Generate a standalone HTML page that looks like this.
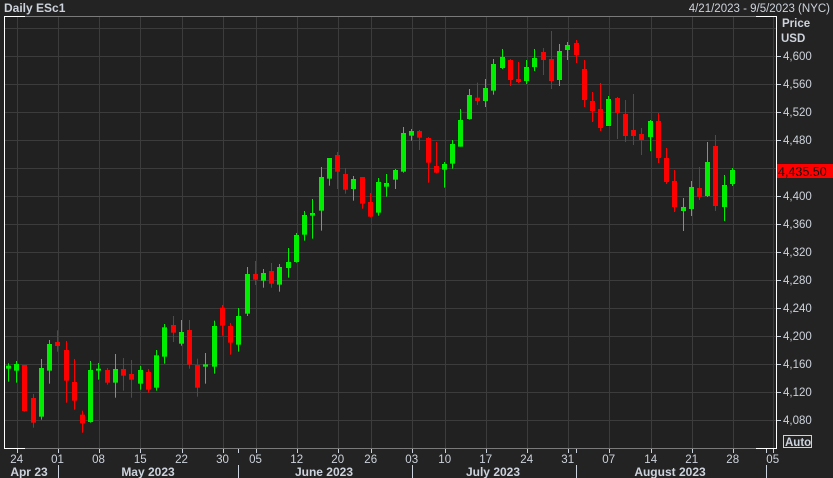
<!DOCTYPE html>
<html><head><meta charset="utf-8"><style>
html,body{margin:0;padding:0;background:#232323;width:833px;height:478px;overflow:hidden}
svg{display:block}
text{font-family:"Liberation Sans",sans-serif;fill:#cdd3dc}
</style></head><body>
<svg id="s" width="833" height="478" xmlns="http://www.w3.org/2000/svg">
<rect x="0" y="0" width="833" height="478" fill="#232323"/>
<rect x="5" y="16" width="771" height="432" fill="#212121"/>
<g id="grid" stroke="#3c3c3c" stroke-width="1"></g>
<g id="c"></g>
<line x1="5" y1="16.5" x2="776" y2="16.5" stroke="#7a7a7a"/>
<line x1="5" y1="448.5" x2="776" y2="448.5" stroke="#7a7a7a"/>
<line x1="4.5" y1="16" x2="4.5" y2="449" stroke="#fff"/>
<line x1="4" y1="16.5" x2="25" y2="16.5" stroke="#fff"/>
<line x1="4" y1="448.5" x2="25" y2="448.5" stroke="#fff"/>
<line x1="776.5" y1="16" x2="776.5" y2="449" stroke="#fff"/>
<line x1="756" y1="16.5" x2="777" y2="16.5" stroke="#fff"/>
<line x1="756" y1="448.5" x2="777" y2="448.5" stroke="#fff"/>
<text x="4" y="12" font-size="12" font-weight="bold">Daily ESc1</text>
<text x="830" y="12" font-size="11.5" text-anchor="end">4/21/2023 - 9/5/2023 (NYC)</text>
<text x="782" y="27" font-size="11.5" font-weight="bold">Price</text>
<text x="781" y="42" font-size="11.5" font-weight="bold">USD</text>
<g id="py"></g>
<rect x="777" y="164" width="56" height="14" fill="#ff0000"/>
<text x="778" y="176" font-size="12.5" style="fill:#111">4,435.50</text>
<rect x="783.5" y="435.5" width="28" height="12" fill="none" stroke="#cdd3dc"/>
<text x="785" y="446" font-size="11.5" font-weight="bold">Auto</text>
<g id="dx"></g>
<text x="29" y="476" font-size="12" font-weight="bold" text-anchor="middle">Apr 23</text>
<text x="148" y="476" font-size="12" font-weight="bold" text-anchor="middle">May 2023</text>
<text x="324" y="476" font-size="12" font-weight="bold" text-anchor="middle">June 2023</text>
<text x="493" y="476" font-size="12" font-weight="bold" text-anchor="middle">July 2023</text>
<text x="670" y="476" font-size="12" font-weight="bold" text-anchor="middle">August 2023</text>
</svg>
<script>
var NS="http://www.w3.org/2000/svg";
function el(p,n,a){var e=document.createElementNS(NS,n);for(var k in a)e.setAttribute(k,a[k]);p.appendChild(e);return e;}
var g=document.getElementById('grid');
var vx=[16.7,57.5,98.5,140.3,181.5,222.5,255.5,296.7,337.7,370.7,411.7,444.7,485.7,526.7,567.7,608.7,650.7,691.7,732.7,772.7];
vx.forEach(function(x){el(g,'line',{x1:Math.round(x)+.5,y1:17,x2:Math.round(x)+.5,y2:448});});
for(var y=28;y<=420;y+=28)el(g,'line',{x1:5,y1:y+.5,x2:776,y2:y+.5});
var py=document.getElementById('py');
for(var k=0;k<=13;k++){var yy=56+28*k,p=4600-40*k;
 if(yy>=164&&yy<=180)continue;
 el(py,'line',{x1:777,y1:yy+.5,x2:781,y2:yy+.5,stroke:'#cdd3dc'});
 var t=el(py,'text',{x:783,y:yy+4,'font-size':'11.5'});t.textContent=(p+'').replace(/(\d)(\d{3})$/,'$1,$2');}
var dx=document.getElementById('dx');
var dl=['24','01','08','15','22','30','05','12','20','26','03','10','17','24','31','07','14','21','28','05'];
vx.forEach(function(x,i){el(dx,'line',{x1:Math.round(x)+.5,y1:449,x2:Math.round(x)+.5,y2:453,stroke:'#cdd3dc'});
 var t=el(dx,'text',{x:x,y:463,'font-size':'11.5','text-anchor':'middle'});t.textContent=dl[i];});
[57.7,238.3,411.7,576.3,765.7].forEach(function(x){el(dx,'line',{x1:Math.round(x)+.5,y1:465,x2:Math.round(x)+.5,y2:478,stroke:'#cdd3dc'});});
[238.3,576.3,765.7].forEach(function(x){el(dx,'line',{x1:Math.round(x)+.5,y1:449,x2:Math.round(x)+.5,y2:453,stroke:'#cdd3dc'});});
var A=[[25,'g',347,356,340,395],[49,'g',342,362,333,398],[73,'r',345,483,345,485],[100,'r',444,518,432,533],[124,'g',354,500,327,509],[148,'g',282,362,270,401],[172,'r',276,288,241,305],[199,'r',300,392,273,458],[223,'r',396,452,327,479],[247,'r',494,520,482,548],[271,'g',360,516,333,518],[295,'g',356,362,339,389],[322,'r',360,398,354,404],[346,'g',357,398,312,443],[370,'r',357,377,324,422],[394,'r',372,389,330,443],[421,'g',360,401,348,419],[445,'r',366,419,357,428],[469,'g',316,413,300,422],[493,'g',232,320,222,341],[520,'r',225,248,198,276],[544,'g',246,281,210,287],[568,'r',240,344,210,356],[592,'r',345,413,326,440],[616,'g',343,350,309,401],[643,'g',228,350,212,371],[667,'r',173,227,165,257],[691,'r',228,278,219,314],[715,'g',198,284,174,305],[742,'g',72,191,51,198],[766,'r',72,89,33,105],[790,'g',69,92,57,113],[814,'r',63,101,39,113]];
var B=[[118,'g',531,584,522,605],[145,'g',516,534,474,563],[169,'g',435,516,429,518],[193,'g',375,434,363,452],[217,'g',369,377,327,446],[244,'g',261,362,231,422],[268,'g',204,266,204,287],[292,'r',195,245,186,297],[316,'r',252,299,234,311],[340,'g',267,297,258,332],[367,'r',261,341,261,356],[391,'r',336,380,309,382],[415,'g',276,368,264,377],[439,'g',279,290,252,320],[466,'g',240,269,237,297],[490,'g',129,245,111,248],[514,'g',123,137,117,152],[538,'r',123,143,120,180],[565,'r',144,218,141,278],[589,'r',228,248,156,250],[613,'g',222,239,216,293],[637,'g',162,221,150,236],[661,'g',90,170,57,170]];
var C=[[28,'g',225,297,207,299],[52,'r',233,243,188,255],[76,'g',204,243,177,261],[100,'g',132,212,117,224],[127,'g',111,144,87,147],[151,'r',120,180,117,198],[175,'r',177,186,126,189],[199,'g',141,183,120,192],[223,'g',114,141,87,153],[250,'r',96,120,84,165],[274,'r',117,183,33,207],[298,'g',93,180,72,198],[322,'g',75,90,66,120],[349,'r',69,105,60,129],[373,'r',147,240,120,261],[397,'r',243,273,216,306],[421,'r',267,324,189,333],[445,'g',237,318,228,318],[472,'r',234,279,231,357],[496,'r',282,348,240,366],[520,'r',330,348,222,375],[544,'r',342,360,324,405],[571,'g',303,351,300,393],[595,'r',303,414,279,429],[619,'r',414,486,384,492],[643,'r',483,561,450,576],[670,'g',561,573,534,633],[694,'g',501,567,483,588],[718,'r',504,531,441,540],[742,'g',426,528,366,531],[766,'r',378,558,345,573],[793,'g',495,561,465,603],[817,'g',450,492,444,498]];
var cg=document.getElementById('c');
function draw(arr,ox,oy){arr.forEach(function(d){var x=Math.round(ox+d[0]/3),col=d[1]=='g'?'#00ee00':'#ff0000';
 el(cg,'rect',{x:x,y:oy+d[4]/3,width:1,height:(d[5]-d[4])/3,fill:col});
 var h=Math.max(2,(d[3]-d[2])/3);
 el(cg,'rect',{x:x-2,y:oy+d[2]/3,width:5,height:h,fill:col});});}
draw(A,0,250);draw(B,240,90);draw(C,460,20);
</script>
</body></html>
